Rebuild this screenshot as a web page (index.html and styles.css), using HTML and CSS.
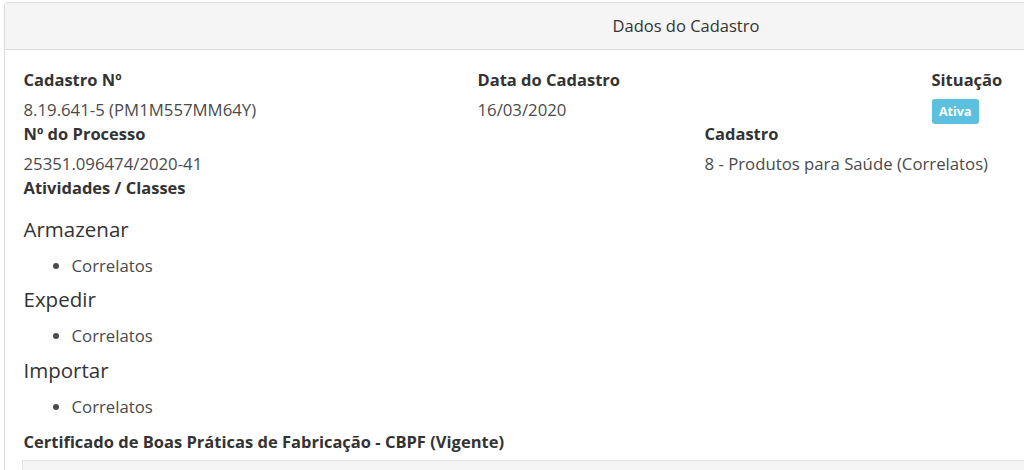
FILE: index.html
```html
<!DOCTYPE html>
<html lang="pt-BR">
<head>
<meta charset="UTF-8">
<title>Dados do Cadastro</title>
<meta name="viewport" content="width=device-width,initial-scale=1">
<link rel="stylesheet" href="styles.css">
</head>
<body>

<div class="panel">
  <div class="panel-heading">Dados do Cadastro</div>
  <div class="panel-body">

    <div class="row row-3">
      <div class="col">
        <div class="lbl">Cadastro Nº</div>
        <div class="val">8.19.641-5 (PM1M557MM64Y)</div>
      </div>
      <div class="col">
        <div class="lbl">Data do Cadastro</div>
        <div class="val">16/03/2020</div>
      </div>
      <div class="col">
        <div class="lbl">Situação</div>
        <div class="val"><span class="badge">Ativa</span></div>
      </div>
    </div>

    <div class="row row-2">
      <div class="col">
        <div class="lbl">Nº do Processo</div>
        <div class="val">25351.096474/2020-41</div>
      </div>
      <div class="col">
        <div class="lbl">Cadastro</div>
        <div class="val">8 - Produtos para Saúde (Correlatos)</div>
      </div>
    </div>

    <div class="lbl">Atividades / Classes</div>
    <div class="atividades">
      <h4>Armazenar</h4>
      <ul>
        <li>Correlatos</li>
      </ul>
      <h4>Expedir</h4>
      <ul>
        <li>Correlatos</li>
      </ul>
      <h4>Importar</h4>
      <ul>
        <li>Correlatos</li>
      </ul>
    </div>

    <div class="lbl">Certificado de Boas Práticas de Fabricação - CBPF (Vigente)</div>
    <div class="well"></div>

  </div>
</div>

</body>
</html>
```

FILE: styles.css
```css
html {
  overflow: hidden;
}
body {
  margin: 0;
  background: #fff;
  color: #333;
  font-family: "Open Sans", "Liberation Sans", sans-serif;
  font-size: 16.75px;
  line-height: 24px;
}
.panel {
  width: 1364px;
  margin: 2px 0 0 4px;
  border: 1px solid #dddddd;
  border-radius: 4px;
  box-sizing: border-box;
}
.panel-heading {
  background: #f5f5f5;
  border-bottom: 1px solid #dddddd;
  border-radius: 3px 3px 0 0;
  padding: 11px 16.5px;
  font-size: 16.5px;
  text-align: center;
  color: #333;
}
.panel-body {
  padding: 17.5px 16.5px 0 18.5px;
}
.row {
  display: grid;
}
.row-3 {
  grid-template-columns: repeat(3, 454px);
}
.row-2 {
  grid-template-columns: repeat(2, 681px);
}
.lbl {
  font-weight: bold;
  font-size: 16.5px;
  color: #333;
  margin-bottom: 6px;
}
.val {
  color: #4a4a4a;
}
.badge {
  display: inline;
  padding: .28em .6em .38em;
  font-size: 12.5px;
  font-weight: bold;
  line-height: 1;
  color: #fff;
  background: #5bc0de;
  border-radius: 3px;
}
.atividades {
  padding: 11px 0 1.5px;
}
.atividades h4 {
  margin: 0 0 13px;
  font-size: 20.5px;
  font-weight: normal;
  line-height: 24px;
  color: #333;
}
.atividades ul {
  margin: 0 0 9.5px;
  padding-left: 48px;
  color: #4a4a4a;
}
.well {
  height: 40px;
  background: #f5f5f5;
  border: 1px solid #e3e3e3;
  margin-left: -1.5px;
}
```
